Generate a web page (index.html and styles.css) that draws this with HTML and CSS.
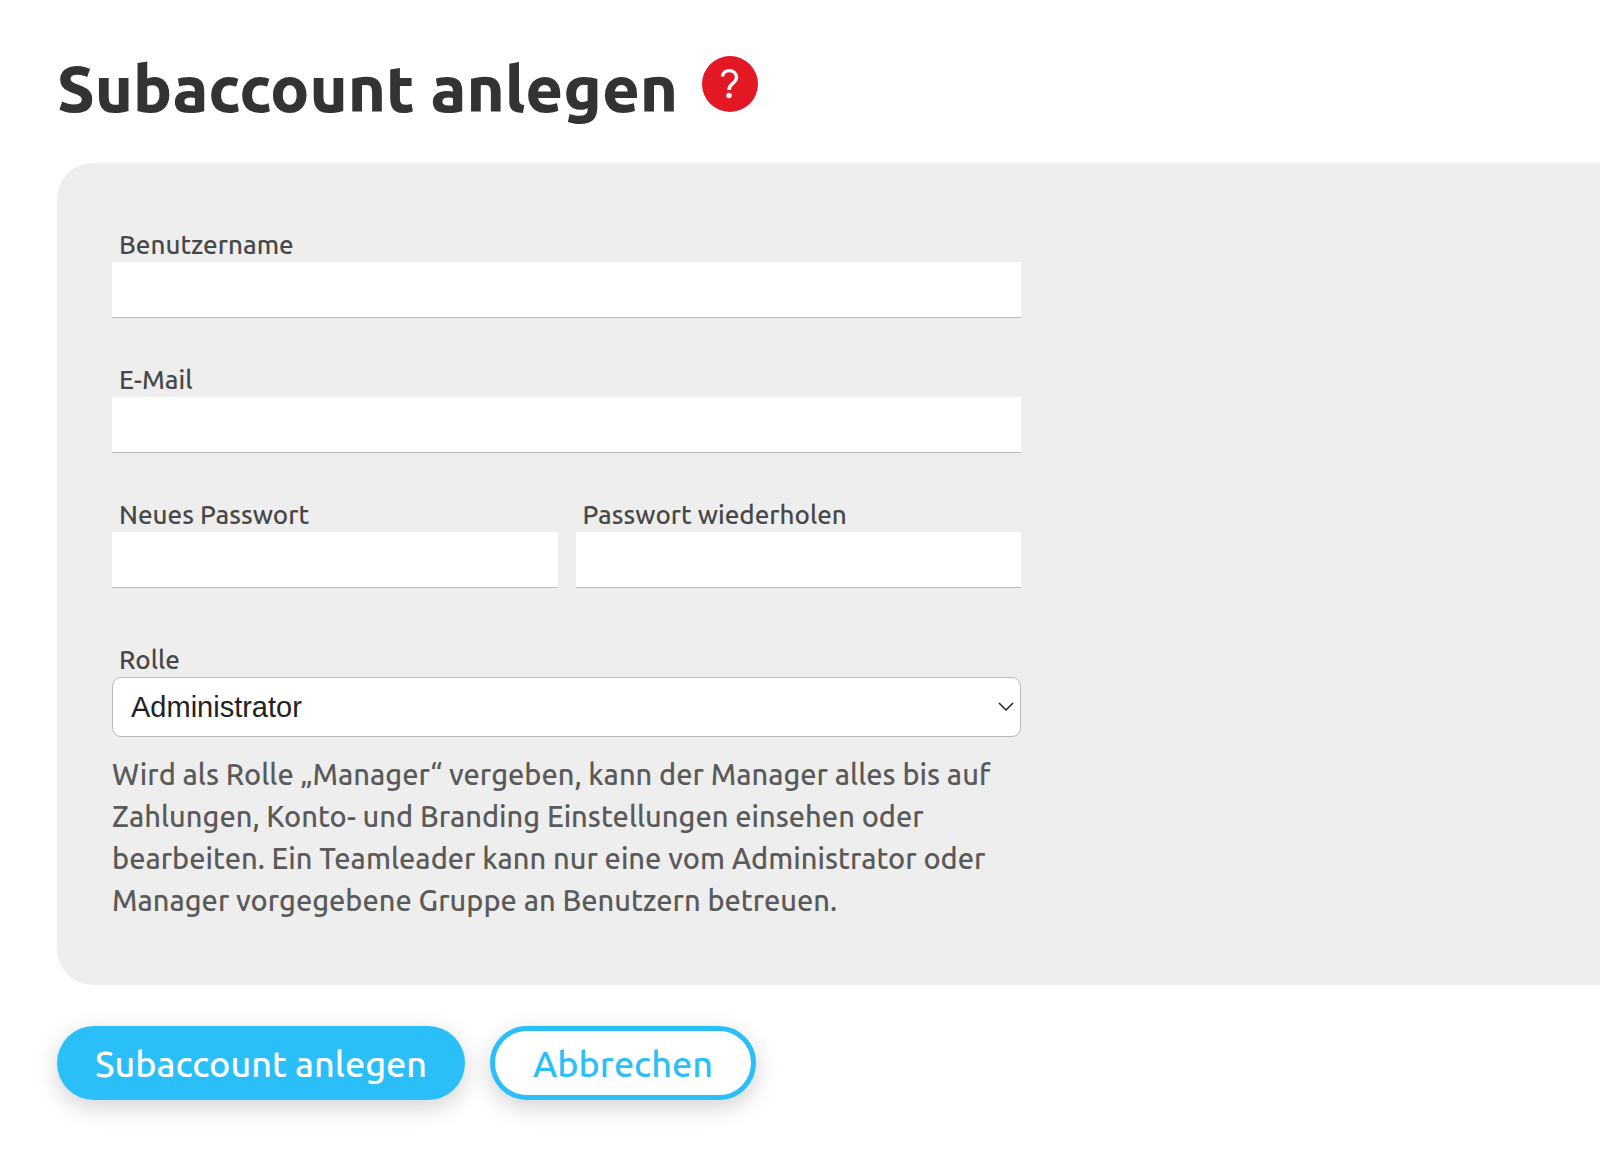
FILE: index.html
```html
<!DOCTYPE html>
<html lang="de">

<head>
    <meta charset="UTF-8">
    <meta name="viewport" content="width=device-width, initial-scale=1.0">
    <title>Subaccount anlegen</title>
    <link rel="stylesheet" href="styles.css">
</head>

<body>
    <main>
        <div class="page-title">
            <h1>Subaccount anlegen</h1>
            <button type="button" class="help-btn" aria-label="Hilfe">
                <svg viewBox="0 0 56 56" aria-hidden="true">
                    <path d="M20.500 20.500 C20.500 12.500 34.500 12.500 34.500 21.500 C34.500 27.500 27 27 27 34" />
                    <circle cx="27" cy="39.500" r="2.700" />
                </svg>
            </button>
        </div>

        <form action="#" method="post">
            <div class="panel">
                <div class="fields">
                    <div class="field">
                        <label for="username">Benutzername</label>
                        <input type="text" id="username" name="username">
                    </div>
                    <div class="field">
                        <label for="email">E-Mail</label>
                        <input type="email" id="email" name="email">
                    </div>
                    <div class="field-row">
                        <div class="field">
                            <label for="password">Neues Passwort</label>
                            <input type="password" id="password" name="password">
                        </div>
                        <div class="field">
                            <label for="passwordRepeat">Passwort wiederholen</label>
                            <input type="password" id="passwordRepeat" name="passwordRepeat">
                        </div>
                    </div>
                    <div class="field field-role">
                        <label for="role">Rolle</label>
                        <div class="select-wrap">
                            <select id="role" name="role">
                                <option selected>Administrator</option>
                                <option>Manager</option>
                                <option>Teamleader</option>
                            </select>
                            <svg class="chevron" viewBox="0 0 16 10" aria-hidden="true">
                                <path d="M1 1 L8 8 L15 1" />
                            </svg>
                        </div>
                        <p class="hint">Wird als Rolle „Manager“ vergeben, kann der Manager alles bis auf Zahlungen, Konto- und Branding Einstellungen einsehen oder bearbeiten. Ein Teamleader kann nur eine vom Administrator oder Manager vorgegebene Gruppe an Benutzern betreuen.</p>
                    </div>
                </div>
            </div>

            <div class="actions">
                <button type="submit" class="btn">Subaccount anlegen</button>
                <button type="button" class="btn btn-outline">Abbrechen</button>
            </div>
        </form>
    </main>
</body>

</html>
```
FILE: styles.css
```css
* {
    margin: 0;
    padding: 0;
    box-sizing: border-box;
}

body {
    font-family: Ubuntu, "Noto Sans", sans-serif;
    font-weight: 500;
    color: #333;
    background: #fff;
}

main {
    padding: 42px 0 64px 57px;
}

/* Title */
.page-title {
    display: flex;
    align-items: flex-start;
    gap: 24px;
    margin-bottom: 29px;
}

h1 {
    font-size: 65px;
    font-weight: bold;
    line-height: 92px;
}

.help-btn {
    flex: none;
    width: 56px;
    height: 56px;
    margin-top: 14px;
    border: none;
    border-radius: 50%;
    background: #e31825;
    cursor: pointer;
}

/* 700 is drawn too thin here, the title needs the heaviest cut */
.page-title h1 {
    font-weight: 800;
}

.help-btn svg {
    display: block;
    fill: #fff;
}

.help-btn path {
    fill: none;
    stroke: #fff;
    stroke-width: 3.4;
}

/* Form panel */
.panel {
    padding: 64px 55px;
    background: #eee;
    border-radius: 36px 0 0 36px;
}

.fields {
    display: flex;
    flex-direction: column;
    gap: 44px;
    max-width: 909px;
}

.field {
    flex: 1;
}

.field-row {
    display: flex;
    gap: 18px;
}

.field-role {
    margin-top: 10px;
}

label {
    display: block;
    padding-left: 7px;
    font-size: 26px;
    line-height: 35px;
    color: #484848;
}

input {
    display: block;
    width: 100%;
    height: 56px;
    padding: 0 16px;
    border: none;
    border-bottom: 1px solid #bbb;
    font-family: "Liberation Sans", Arial, sans-serif;
    font-size: 29px;
    background: #fff;
}

.select-wrap {
    position: relative;
}

select {
    display: block;
    width: 100%;
    height: 60px;
    padding: 0 40px 0 18px;
    border: 1px solid #bbb;
    border-radius: 9px;
    font-family: "Liberation Sans", Arial, sans-serif;
    font-size: 29px;
    color: #222;
    background: #fff;
    appearance: none;
}

.chevron {
    position: absolute;
    top: 25px;
    right: 7px;
    width: 16px;
    height: 10px;
    fill: none;
    stroke: #222;
    stroke-width: 1.5;
    pointer-events: none;
}

.hint {
    margin-top: 16px;
    font-size: 29px;
    line-height: 42px;
    color: #5a5a5a;
}

/* Buttons */
.actions {
    display: flex;
    gap: 25px;
    margin-top: 41px;
}

.btn {
    height: 74px;
    padding: 0 38px;
    border: none;
    border-radius: 37px;
    font-family: inherit;
    font-weight: 500;
    font-size: 36px;
    color: #fff;
    background: #2bbff9;
    box-shadow: 0 7px 25px rgba(0, 0, 0, 0.18);
    cursor: pointer;
}

.btn-outline {
    border: 5px solid #2bbff9;
    color: #2bbff9;
    background: #fff;
}
```
